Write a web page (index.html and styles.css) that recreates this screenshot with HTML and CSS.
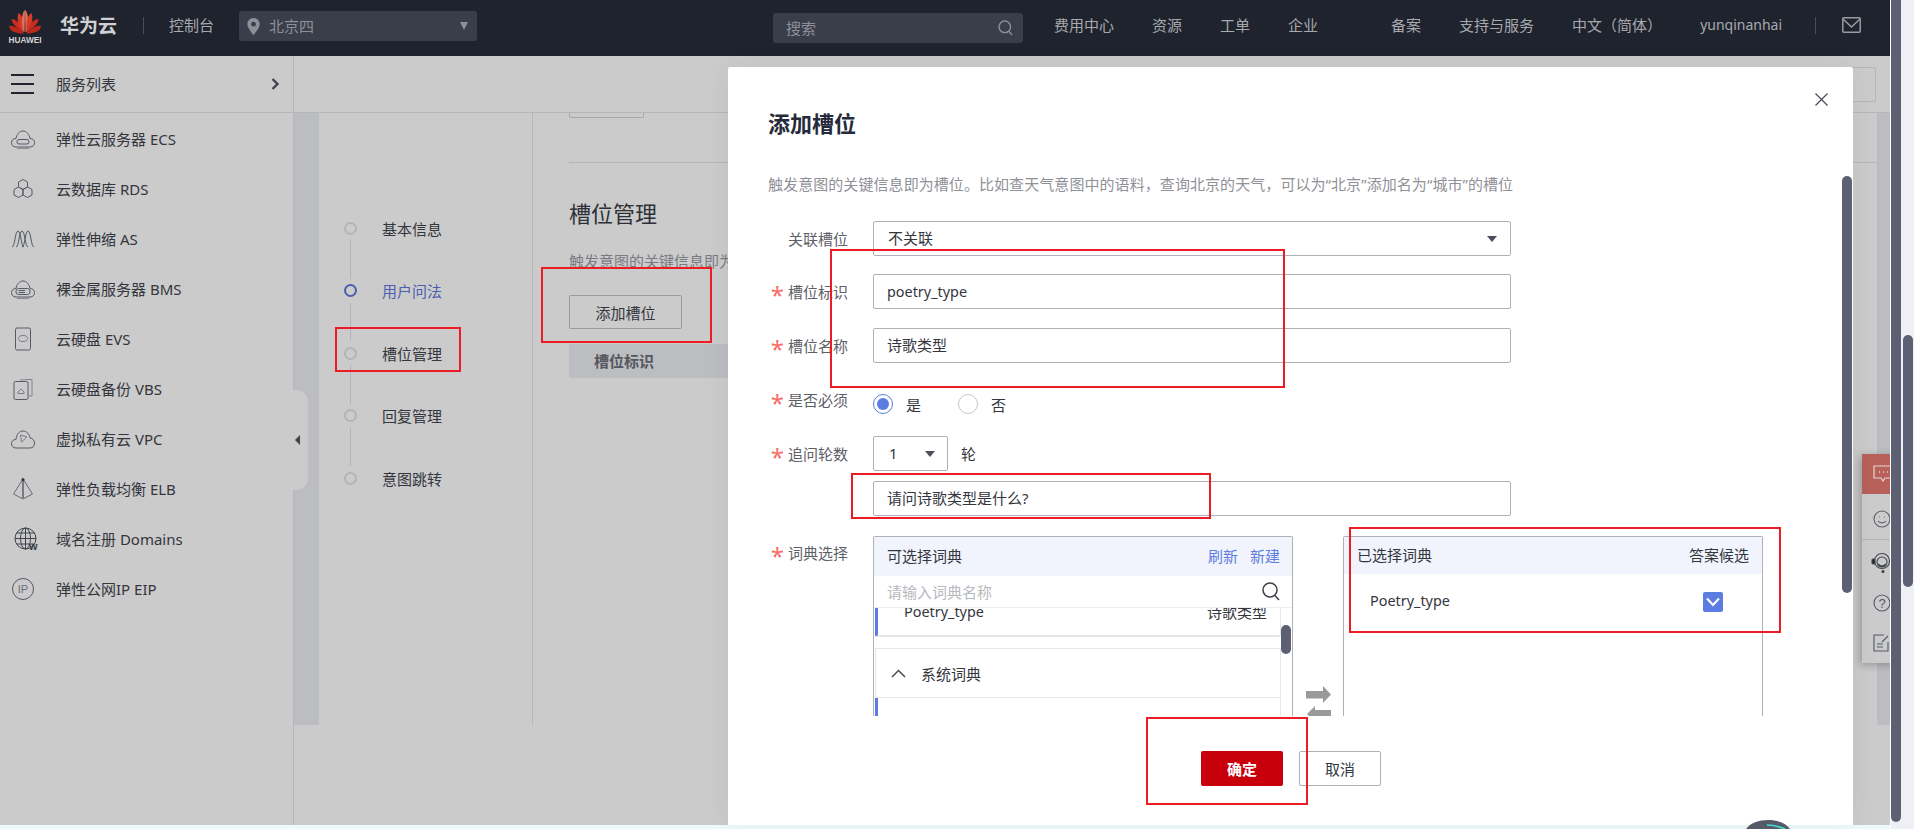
FILE: index.html
```html
<!DOCTYPE html>
<html lang="zh-CN">
<head>
<meta charset="utf-8">
<title>添加槽位</title>
<link rel="stylesheet" href="styles.css">
</head>
<body>
<div class="page">
  <div class="app">
    <header class="header">
      <div class="logo">
        <svg width="32" height="25" viewBox="0 0 32 25">
          <g transform="translate(16 25)">
            <path fill="#b92a1c" d="M-1 -1C-9 -2 -15 -3 -16 -9C-11 -10 -5 -6 -1 -1Z"/>
            <path fill="#c92d1f" d="M-1.5 -2.5C-6 -6 -13 -10 -13.500 -16C-8 -16 -3 -9 -1.500 -2.500Z"/>
            <path fill="#d73a28" d="M-2 -3.500C-7 -9 -8.500 -17 -6.500 -22C-2 -20 -.5 -10 -2 -3.500Z"/>
            <path fill="#e0715a" d="M-1 -3C-3 -10 -3.500 -20 .000 -25C.5 -25 .5 -25 0 -3Z" transform="translate(-.5 0)"/>
            <path fill="#e0715a" d="M1 -3C3 -10 3.500 -20 0 -25C-.5 -25 -.5 -25 0 -3Z" transform="translate(.5 0)"/>
            <path fill="#d73a28" d="M2 -3.500C7 -9 8.500 -17 6.500 -22C2 -20 .5 -10 2 -3.500Z"/>
            <path fill="#c92d1f" d="M1.500 -2.500C6 -6 13 -10 13.500 -16C8 -16 3 -9 1.500 -2.500Z"/>
            <path fill="#b92a1c" d="M1 -1C9 -2 15 -3 16 -9C11 -10 5 -6 1 -1Z"/>
          </g>
        </svg>
        <span class="logo-text">HUAWEI</span>
      </div>
      <span class="brand">华为云</span>
      <span class="head-div"></span>
      <span class="console">控制台</span>
      <div class="region">
        <svg width="13" height="17" viewBox="0 0 13 17"><path fill="#8d9097" fill-rule="evenodd" d="M6.500 0A6.200 6.200 0 0 0 .3 6.200C.3 10 6.500 17 6.500 17S12.700 10 12.700 6.200A6.200 6.200 0 0 0 6.500 0ZM6.500 3.800A2.400 2.400 0 1 1 6.500 8.600 2.400 2.400 0 0 1 6.500 3.800Z"/></svg>
        <span class="region-name">北京四</span>
        <span class="tri tri-region"></span>
      </div>
      <div class="search">
        <span>搜索</span>
        <svg width="15" height="16" viewBox="0 0 15 16" fill="none" stroke="#8d9097" stroke-width="1.400"><circle cx="6.800" cy="6.800" r="5.800"/><path d="M10.800 11.200L14 15"/></svg>
      </div>
      <nav class="nav nav-main"><span>费用中心</span><span>资源</span><span>工单</span><span>企业</span></nav>
      <nav class="nav nav-side"><span>备案</span><span>支持与服务</span><span>中文（简体）</span><span class="user">yunqinanhai</span></nav>
      <span class="head-div head-div-r"></span>
      <svg class="mail" width="19" height="16" viewBox="0 0 19 16" fill="none" stroke="#9a9ca1" stroke-width="1.500"><rect x=".8" y=".8" width="17.400" height="14.400" rx="1"/><path d="M1 2L9.500 10L18 2"/></svg>
    </header>

    <div class="main">
      <aside class="sidebar">
        <div class="sb-head">
          <svg width="23" height="20" viewBox="0 0 23 20" fill="#22252e"><rect width="23" height="2"/><rect y="9" width="23" height="2"/><rect y="18" width="23" height="2"/></svg>
          <span class="sb-title">服务列表</span>
          <svg class="sb-chev" width="9" height="12" viewBox="0 0 9 12" fill="none" stroke="#3f434f" stroke-width="2.400"><path d="M1.500 1L6.500 6L1.500 11"/></svg>
        </div>
        <ul class="menu">
          <li><svg class="mi" width="24" height="24" viewBox="0 0 24 24" fill="none" stroke="#555a66"><path d="M5 20C2 20 .5 18 .5 15.500C.5 13 2.500 11.500 5 11.500C5.500 7.500 8.500 4 12 4C15.500 4 18.500 7.500 19 11.500C21.500 11.500 23.500 13 23.500 15.500C23.500 18 22 20 19 20Z"/><rect x="6" y="12.500" width="12" height="4.500" rx="2"/><path d="M6 21.500H18" stroke="#8a8d94"/></svg><span>弹性云服务器 ECS</span></li>
          <li><svg class="mi" width="24" height="24" viewBox="0 0 24 24" fill="none" stroke="#555a66"><path d="M12 2.500L16.500 5V10L12 12.500L7.500 10V5Z"/><path d="M7.500 10L12 12.500V18L7.500 20.500L3 18V12.500Z"/><path d="M16.500 10L21 12.500V18L16.500 20.500L12 18V12.500Z"/></svg><span>云数据库 RDS</span></li>
          <li><svg class="mi" width="24" height="24" viewBox="0 0 24 24" fill="none" stroke="#555a66"><path d="M1 20C4 20 4 4 7 4C10 4 10 20 13 20"/><path d="M5 20C8 20 8 4 11 4C14 4 14 20 17 20"/><path d="M11 20C14 20 14 4 17 4C20 4 20 20 23 20"/></svg><span>弹性伸缩 AS</span></li>
          <li><svg class="mi" width="24" height="24" viewBox="0 0 24 24" fill="none" stroke="#555a66"><path d="M5 20C2 20 .5 18 .5 15.500C.5 13 2.500 11.500 5 11.500C5.500 7.500 8.500 4 12 4C15.500 4 18.500 7.500 19 11.500C21.500 11.500 23.500 13 23.500 15.500C23.500 18 22 20 19 20Z"/><rect x="5" y="11.500" width="14" height="6" rx="2.500"/><path d="M7.500 13.500H14M7.500 15.500H14"/><path d="M6 21.500H18" stroke="#8a8d94"/></svg><span>裸金属服务器 BMS</span></li>
          <li><svg class="mi" width="24" height="24" viewBox="0 0 24 24" fill="none" stroke="#555a66"><rect x="4.500" y="1" width="15" height="22" rx="1.500"/><ellipse cx="12" cy="11.500" rx="4.500" ry="3" stroke="#7c7f88"/></svg><span>云硬盘 EVS</span></li>
          <li><svg class="mi" width="24" height="24" viewBox="0 0 24 24" fill="none" stroke="#555a66"><path d="M9 3L18 2.500H21V19H18" stroke="#80838c"/><rect x="3" y="4.500" width="14" height="18" rx="1.500"/><path d="M7 15L10 12L13 15V16.500H7Z" stroke="#7c7f88"/></svg><span>云硬盘备份 VBS</span></li>
          <li><svg class="mi" width="24" height="24" viewBox="0 0 24 24" fill="none" stroke="#555a66"><path d="M5 21C2 21 .5 19 .5 16.500C.5 14 2.500 12.500 5 12.500C5.500 7 8.500 4 12 4C16 4 18.500 7.500 19 11C21.500 11 23.500 13.500 23.500 16C23.500 19 22 21 19 21Z"/><path d="M9.500 8L16 10L10.500 15Z" stroke="#7c7f88"/></svg><span>虚拟私有云 VPC</span></li>
          <li><svg class="mi" width="24" height="24" viewBox="0 0 24 24" fill="none" stroke="#666a75"><path d="M12 2L2.500 17L12 22L21.500 17Z"/><path d="M12 2V21" stroke="#4c4f58" stroke-width="1.300"/><circle cx="12" cy="2.500" r="1.500" fill="#33363f" stroke="none"/></svg><span>弹性负载均衡 ELB</span></li>
          <li><svg class="mi mi-globe" width="24" height="24" viewBox="0 0 24 24" fill="none" stroke="#3f424c"><circle cx="11.500" cy="11.500" r="10.500"/><ellipse cx="11.500" cy="11.500" rx="5" ry="10.500"/><path d="M1 11.500H22M2.500 6H20.500M2.500 17H20.500M11.500 1V22"/><text x="15" y="23" class="globe-w" stroke="none">W</text></svg><span>域名注册 Domains</span></li>
          <li><svg class="mi" width="24" height="24" viewBox="0 0 24 24" fill="none" stroke="#555a66"><circle cx="12" cy="12" r="10.500"/><text x="12" y="16" class="ip-text" stroke="none" text-anchor="middle">IP</text></svg><span>弹性公网IP EIP</span></li>
        </ul>
        <div class="sb-tab"><span class="tri-left"></span></div>
      </aside>

      <section class="content">
        <div class="topbar"><span class="top-btn"></span></div>
        <div class="work">
          <div class="band"></div>
          <div class="steps">
            <div class="step"><i class="dot"></i><span>基本信息</span></div>
            <i class="step-line"></i>
            <div class="step step-on"><i class="dot"></i><span>用户问法</span></div>
            <i class="step-line"></i>
            <div class="step"><i class="dot"></i><span>槽位管理</span></div>
            <i class="step-line"></i>
            <div class="step"><i class="dot"></i><span>回复管理</span></div>
            <i class="step-line"></i>
            <div class="step"><i class="dot"></i><span>意图跳转</span></div>
          </div>
          <div class="panel">
            <div class="stub"></div>
            <div class="rule"></div>
            <h2 class="panel-title">槽位管理</h2>
            <p class="panel-desc">触发意图的关键信息即为</p>
            <button class="btn-add">添加槽位</button>
            <div class="table-head">槽位标识</div>
          </div>
          <div class="band band-r"></div>
        </div>
        <div class="foot"></div>
      </section>
    </div>
    <div class="strip"></div>

    <div class="toolbar">
      <div class="tool tool-red"><svg width="20" height="20" viewBox="0 0 20 20" fill="none" stroke="#e8d5d3" stroke-width="1.200"><path d="M1 2H19V14H12L10 17L8 14H1Z"/><path d="M6 8H7M10 8H11M14 8H15" stroke-width="1.500"/></svg></div>
      <div class="tool tool-smile"><svg width="18" height="20" viewBox="0 0 18 20" fill="none" stroke="#5b5e68" stroke-width="1.100"><circle cx="9" cy="10" r="8"/><path d="M5 12C6.500 14.500 11.500 14.500 13 12"/><path d="M6 8H6.800M11.200 8H12"/></svg></div>
      <div class="tool tool-head"><svg width="20" height="22" viewBox="0 0 20 22" fill="none" stroke="#44474f" stroke-width="1.100"><circle cx="11" cy="9" r="7.500"/><circle cx="11" cy="10" r="5"/><path d="M7 12C9 15 13 15 15 12" stroke-width="1.800"/><rect x="1" y="7" width="3" height="5" rx="1" fill="#22252e"/><circle cx="12" cy="19.500" r="1" fill="#22252e"/></svg></div>
      <div class="tool"><svg width="18" height="18" viewBox="0 0 18 18" fill="none" stroke="#555a66" stroke-width="1.100"><circle cx="9" cy="9" r="8"/><text x="9" y="13.500" class="q-text" stroke="none" text-anchor="middle">?</text></svg></div>
      <div class="tool"><svg width="18" height="18" viewBox="0 0 18 18" fill="none" stroke="#555a66" stroke-width="1.100"><path d="M11 1H1V17H15V8"/><path d="M4 10H10M4 13H10"/><path d="M9 8L15 2"/></svg></div>
    </div>

    <div class="modal">
      <h1 class="modal-title">添加槽位</h1>
      <svg class="modal-close" width="13" height="13" viewBox="0 0 13 13" fill="none" stroke="#4a4d5a" stroke-width="1.300"><path d="M.5 .5L12.500 12.500M12.500 .5L.5 12.500"/></svg>
      <p class="modal-desc">触发意图的关键信息即为槽位。比如查天气意图中的语料，查询北京的天气，可以为“北京”添加名为“城市”的槽位</p>
      <div class="form">
        <div class="row">
          <label class="lbl">关联槽位</label>
          <div class="field field-sel">不关联<span class="tri tri-dark"></span></div>
        </div>
        <div class="row row-2">
          <label class="lbl"><em>*</em>槽位标识</label>
          <div class="field latin">poetry_type</div>
        </div>
        <div class="row row-3">
          <label class="lbl"><em>*</em>槽位名称</label>
          <div class="field">诗歌类型</div>
        </div>
        <div class="row row-radio">
          <label class="lbl lbl-radio"><em>*</em>是否必须</label>
          <span class="radio radio-on"><i></i></span><span class="radio-txt">是</span>
          <span class="radio radio-off"></span><span class="radio-txt">否</span>
        </div>
        <div class="row row-ask">
          <label class="lbl"><em>*</em>追问轮数</label>
          <div class="field field-num">1<span class="tri tri-dark"></span></div>
          <span class="unit">轮</span>
        </div>
        <div class="row row-q">
          <span class="lbl"></span>
          <div class="field">请问诗歌类型是什么?</div>
        </div>
        <div class="row row-dict">
          <label class="lbl lbl-dict"><em>*</em>词典选择</label>
          <div class="box">
            <div class="box-head"><span>可选择词典</span><span class="links"><a>刷新</a><a>新建</a></span></div>
            <div class="box-search"><span>请输入词典名称</span>
              <svg width="18" height="19" viewBox="0 0 18 19" fill="none" stroke="#3d4048" stroke-width="1.500"><circle cx="8" cy="8" r="7"/><path d="M13 13.500L17 18"/></svg>
            </div>
            <div class="box-list">
              <div class="card card-a"><span class="latin">Poetry_type</span><span>诗歌类型</span></div>
              <div class="card card-b">
                <svg width="15" height="9" viewBox="0 0 15 9" fill="none" stroke="#4a4d5a" stroke-width="1.500"><path d="M1 8L7.500 1.500L14 8"/></svg>
                <span>系统词典</span>
              </div>
              <div class="card card-c"></div>
              <span class="list-thumb"></span>
            </div>
          </div>
          <svg class="swap" width="25" height="30" viewBox="0 0 25 30" fill="#9a9a9a"><path d="M0 5H17V0L25 8.500L17 17V12.500H0Z"/><path d="M25 24H9V20L1 28L5 32H25Z"/></svg>
          <div class="box box-right">
            <div class="box-head box-head-r"><span>已选择词典</span><span>答案候选</span></div>
            <div class="chosen"><span class="latin">Poetry_type</span><span class="check"><svg width="14" height="10" viewBox="0 0 14 10" fill="none" stroke="#fff" stroke-width="2"><path d="M1 1.500L7 8L13 1.500"/></svg></span></div>
          </div>
        </div>
      </div>
      <div class="modal-foot">
        <button class="btn-ok">确定</button>
        <button class="btn-cancel">取消</button>
      </div>
      <span class="modal-thumb"></span>
    </div>

    <svg class="orb" width="44" height="9" viewBox="0 0 44 9"><path fill="#565a69" d="M0 9C4 3 13 0 22 0C31 0 40 3 44 9Z"/><path fill="none" stroke="#43e0d0" stroke-width="1.600" d="M21 5C28 5 34 7 39 9"/></svg>

    <span class="mark mark-a"></span>
    <span class="mark mark-b"></span>
    <span class="mark mark-c"></span>
    <span class="mark mark-d"></span>
    <span class="mark mark-e"></span>
    <span class="mark mark-f"></span>
  </div>
  <div class="gutter">
    <span class="track track-a"></span>
    <span class="track track-b"></span>
  </div>
</div>
</body>
</html>
```
FILE: styles.css
```css
* { box-sizing: border-box; }
html, body { margin: 0; padding: 0; height: 100%; overflow: hidden; background: #fff; }
body { font-family: "Noto Sans", "Noto Sans CJK SC", sans-serif; font-size: 15px; color: #3a3c44; }
h1, h2, p, ul { margin: 0; padding: 0; }
ul { list-style: none; }
i, em { font-style: normal; }
button { font: inherit; padding: 0; background: none; cursor: pointer; }

.page { display: flex; width: 1914px; height: 829px; overflow: hidden; }
.app { position: relative; width: 1890px; height: 829px; display: flex; flex-direction: column; overflow: hidden; flex: none; }

.gutter { flex: none; width: 24px; height: 829px; display: flex; gap: 2px; padding-left: 1px; background: linear-gradient(90deg, #fff 1px, #eef0f5 1px); }
.track { width: 10px; background: #5d6073; flex: none; }
.track-a { height: 822px; border-radius: 0 0 5px 5px; }
.track-b { height: 252px; margin-top: 335px; border-radius: 5px; }

/* header */
.header { flex: none; height: 56px; background: #1f232d; display: flex; align-items: center; padding: 0 0 6px 9px; color: #a7a9ad; line-height: 20px; }
.logo { width: 32px; display: flex; flex-direction: column; align-items: center; margin-top: 6px; }
.logo svg { display: block; }
.logo-text { font-family: "Liberation Sans", sans-serif; font-weight: 700; font-size: 8.300px; line-height: 11px; color: #d2d3d6; }
.brand { margin-left: 19px; font-size: 19px; font-weight: 700; color: #cfd0d3; width: 57px; flex: none; margin-top: 1px; }
.head-div { width: 1px; height: 17px; background: #4a4d57; margin-left: 26px; flex: none; }
.console { margin-left: 25px; flex: none; }
.region { margin-left: 25px; width: 238px; height: 30px; margin-top: 2px; background: #3a3e4a; border-radius: 3px; display: flex; align-items: center; padding-left: 8px; flex: none; color: #8d9097; }
.region-name { margin-left: 9px; }
.tri { display: block; width: 0; height: 0; border-style: solid; border-color: transparent; border-width: 6px 5px 0; }
.tri-region { margin-left: auto; margin-right: 9px; border-top-color: #8d9097; border-width: 8px 4.500px 0; }
.search { margin-left: 296px; width: 250px; height: 30px; margin-top: 6px; background: #3a3e4a; border-radius: 3px; display: flex; align-items: center; justify-content: space-between; padding: 0 10px 0 13px; color: #8d9097; flex: none; }
.search span { margin-top: -1px; }
.nav { display: flex; flex: none; }
.nav-main { margin-left: 31px; gap: 38px; }
.nav-side { margin-left: 73px; gap: 38px; }
.user { font-size: 14px; }
.head-div-r { margin-left: 33px; }
.mail { margin-left: 26px; flex: none; }

/* main frame */
.main { flex: none; height: 769px; display: flex; background: #cbcbcb; }
.sidebar { position: relative; flex: none; width: 294px; border-right: 1px solid #b5b6b9; }
.sb-head { height: 57px; border-bottom: 1px solid #b5b6b9; margin-right: -1px; display: flex; align-items: center; padding-left: 11px; color: #34363d; }
.sb-title { margin: -2px 0 0 22px; }
.sb-chev { margin-left: 155px; }
.menu { padding-top: 1px; }
.menu li { height: 50px; display: flex; align-items: center; padding: 0 0 1px 11px; gap: 21px; color: #34363d; white-space: nowrap; }
.mi { flex: none; }
.mi-globe { margin-left: 3px; margin-right: -3px; }
.globe-w { font-family: "Liberation Sans", sans-serif; font-size: 9px; font-weight: 700; fill: #2f3138; }
.ip-text { font-family: "Liberation Sans", sans-serif; font-size: 11px; fill: #6a6d76; }
.q-text { font-family: "Liberation Sans", sans-serif; font-size: 13px; fill: #555a66; }
.sb-tab { position: absolute; left: 293px; top: 334px; width: 15px; height: 100px; background: #cbcbcb; border-radius: 0 12px 12px 0; display: flex; align-items: center; z-index: 1; }
.tri-left { display: block; margin-left: 2px; width: 0; height: 0; border-style: solid; border-color: transparent #3f434f transparent transparent; border-width: 5.500px 5px 5.500px 0; }

.content { flex: 1; min-width: 0; display: flex; flex-direction: column; }
.topbar { flex: none; height: 57px; border-bottom: 1px solid #b5b6b9; display: flex; justify-content: flex-end; padding: 11px 14px 0 0; background: #cbcbcb; }
.top-btn { width: 120px; height: 35px; border: 1px solid #b5b6b9; border-radius: 2px; }
.work { flex: none; height: 612px; display: flex; }
.band { flex: none; width: 25px; background: #bcbdc0; }
.band-r { width: 13px; }
.steps { flex: none; width: 214px; border-right: 1px solid #b5b6b9; padding: 103px 0 0 25px; }
.step { height: 24px; display: flex; align-items: center; gap: 25px; color: #34363d; }
.step span { flex: none; }
.dot { flex: none; width: 13px; height: 13px; border-radius: 50%; border: 2.500px solid #b3b4b8; }
.step-on { color: #4b5fae; }
.step-on .dot { border-color: #4b5fae; }
.step-line { display: block; width: 1px; height: 38.500px; margin-left: 6px; background: #b3b4b8; }
.panel { flex: 1; min-width: 0; padding-left: 36px; overflow: hidden; }
.stub { width: 75px; height: 5px; border: 1px solid #a7a8ac; border-top: 0; border-radius: 0 0 2px 2px; }
.rule { height: 1px; background: #b5b6b9; margin-top: 44px; }
.panel-title { margin-top: 37px; font-size: 22px; font-weight: 400; line-height: 26px; color: #2e3038; }
.panel-desc { margin-top: 22px; line-height: 26px; color: #797b82; }
.btn-add { display: block; margin-top: 21px; width: 113px; height: 34px; border: 1px solid #9a9ba0; border-radius: 2px; color: #34363d; }
.table-head { margin-top: 15px; width: 900px; height: 34px; line-height: 34px; background: #bcbdc0; padding-left: 25px; font-weight: 700; color: #55575e; }
.foot { flex: 1; }
.strip { flex: none; height: 4px; background: #ebfbfa; }

/* floating toolbar */
.toolbar { position: absolute; left: 1862px; top: 454px; width: 40px; height: 209px; background: #cbcbcb; box-shadow: -2px 2px 8px rgba(0,0,0,.25); display: flex; flex-direction: column; align-items: flex-start; padding-left: 11px; }
.tool { height: 40px; display: flex; align-items: center; }
.tool-red { margin-left: -11px; padding-left: 11px; width: 40px; background: #b8605a; }
.tool-smile { height: 46px; margin-left: -11px; padding: 6px 0 0 11px; width: 40px; border-bottom: 1px solid #b5b6b9; }
.tool-head { height: 44px; margin-left: -2px; padding-top: 4px; }

/* modal */
.modal { position: absolute; left: 728px; top: 67px; width: 1125px; height: 758px; background: #fff; padding: 43px 0 0 40px; border-radius: 2px 2px 0 0; box-shadow: 0 0 28px rgba(0,0,0,.06); }
.modal-title { font-size: 22px; font-weight: 700; line-height: 26px; color: #252b3a; }
.modal-close { position: absolute; left: 1087px; top: 26px; }
.modal-desc { margin-top: 35px; line-height: 26px; color: #8f9197; white-space: nowrap; letter-spacing: .07px; }
.form { margin-top: 24px; width: 1040px; height: 495px; overflow: hidden; }
.row { display: flex; align-items: center; }
.row-2 { margin-top: 18px; }
.row-3 { margin-top: 19px; }
.row-radio { margin-top: 31px; height: 20px; }
.row-ask { margin-top: 22px; }
.row-q { margin-top: 10px; }
.row-dict { margin-top: 20px; align-items: flex-start; }
.latin { font-size: 14.400px; }
.lbl { flex: none; width: 80px; margin-right: 25px; display: flex; justify-content: flex-end; align-items: center; color: #5e6068; line-height: 26px; }
.lbl em { color: #f66f6a; font-size: 24px; line-height: 20px; margin-right: 4px; height: 14px; }
.lbl-radio { margin-top: -8px; }
.lbl-dict { margin-top: 4px; }
.field { flex: none; width: 638px; height: 35px; border: 1px solid #b0b0b8; border-radius: 2px; line-height: 33px; padding-left: 13px; color: #34363d; display: flex; align-items: center; justify-content: space-between; }
.field-sel { padding-left: 14px; padding-right: 13px; }
.field-num { width: 75px; padding-left: 15px; padding-right: 12px; }
.tri-dark { border-top-color: #4a4d5a; }
.unit { margin-left: 13px; color: #34363d; }
.radio { flex: none; width: 20px; height: 20px; border-radius: 50%; border: 1px solid #c6c7cc; display: flex; align-items: center; justify-content: center; }
.radio-on { border-color: #5b7ce0; }
.radio-on i { width: 12px; height: 12px; border-radius: 50%; background: #5b7ce0; }
.radio-txt { margin-left: 13px; color: #34363d; }
.radio-off { margin-left: 37px; }
.box { flex: none; width: 420px; height: 190px; border: 1px solid #b0b0b8; border-bottom: 0; border-radius: 2px 2px 0 0; }
.box-head { height: 39px; background: #f1f4fc; display: flex; justify-content: space-between; align-items: center; padding: 0 12px 3px 13px; color: #34363d; }
.links { display: flex; gap: 12px; color: #5f7ce0; }
.box-search { height: 32px; border-bottom: 1px solid #eceef2; display: flex; align-items: center; justify-content: space-between; padding: 0 12px 0 13px; color: #b8b9be; font-size: 15px; }
.box-list { position: relative; height: 118px; overflow: hidden; }
.card { margin-left: 1px; width: 406px; border: 1px solid #e4e6ec; }
.card-a { height: 50px; margin-top: -21px; border-left: 3px solid #5b7ce0; border-top: 0; border-bottom-width: 2px; display: flex; justify-content: space-between; align-items: center; padding: 0 13px 0 26px; color: #34363d; border-radius: 0 0 2px 2px; }
.card-b { height: 50px; margin-top: 11px; display: flex; align-items: center; padding-left: 15px; gap: 15px; color: #34363d; }
.card-c { height: 60px; border-top: 0; border-left: 3px solid #5b7ce0; }
.list-thumb { position: absolute; right: 1px; top: 17px; width: 10px; height: 29px; background: #5d6073; border-radius: 5px; }
.swap { flex: none; margin: 150px 12px 0 13px; }
.box-right { width: 420px; }
.box-head-r { height: 37px; padding: 0 13px 2px 13px; }
.chosen { display: flex; justify-content: space-between; align-items: center; height: 52px; padding: 0 39px 0 26px; color: #34363d; }
.check { width: 20px; height: 20px; margin-top: 4px; background: #5b7ce0; border-radius: 2px; display: flex; align-items: center; justify-content: center; }
.modal-foot { margin: 35px 0 0 433px; display: flex; gap: 16px; }
.btn-ok { width: 82px; height: 35px; background: #c7000b; border: 0; border-radius: 2px; color: #fff; font-weight: 700; }
.btn-cancel { width: 82px; height: 35px; background: #fff; border: 1px solid #b0b0b8; border-radius: 2px; color: #34363d; }
.modal-thumb { position: absolute; left: 1114px; top: 109px; width: 10px; height: 417px; background: #5d6073; border-radius: 5px; }

.orb { position: absolute; left: 1746px; top: 820px; }

/* red annotation frames */
.mark { position: absolute; border: 2px solid #ed1c24; z-index: 5; }
.mark-a { left: 335px; top: 327px; width: 126px; height: 45px; }
.mark-b { left: 541px; top: 267px; width: 171px; height: 76px; }
.mark-c { left: 830px; top: 249px; width: 455px; height: 139px; }
.mark-d { left: 851px; top: 473px; width: 360px; height: 46px; }
.mark-e { left: 1349px; top: 527px; width: 432px; height: 106px; }
.mark-f { left: 1146px; top: 717px; width: 162px; height: 88px; }
```
